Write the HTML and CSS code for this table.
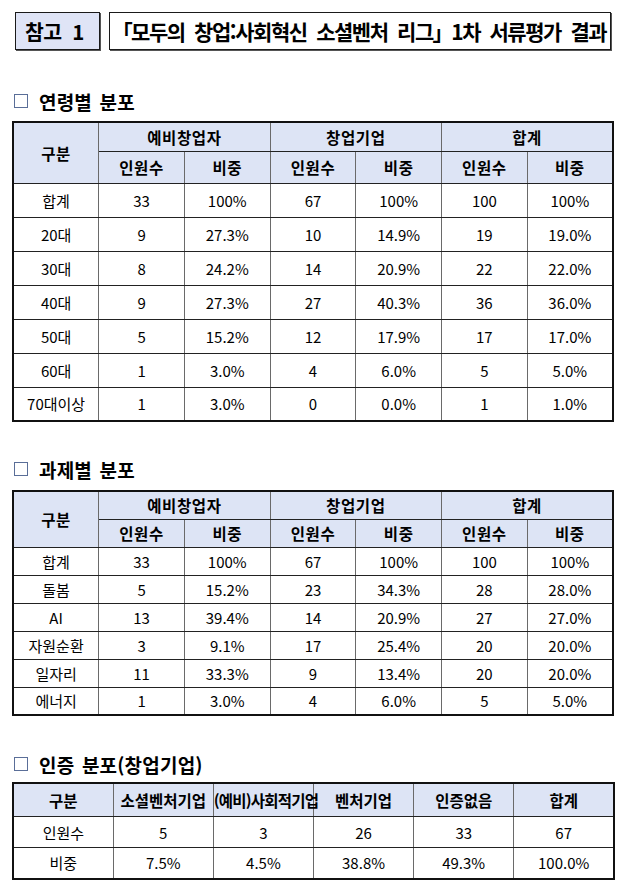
FILE: index.html
```html
<!DOCTYPE html>
<html lang="ko">
<head>
<meta charset="utf-8">
<title>1차 서류평가 결과</title>
<link rel="stylesheet" href="styles.css">
</head>
<body>
<div class="page">
  <div class="top">
    <div class="tag">참고&nbsp;&nbsp;1</div>
    <div class="title">「모두의 창업:사회혁신 소셜벤처 리그」 1차 서류평가 결과</div>
  </div>

  <h2 class="sec sec-1"><span class="chk"></span>연령별 분포</h2>
  <table class="grid grid-age">
    <thead>
      <tr class="h1">
        <th rowspan="2">구분</th>
        <th colspan="2">예비창업자</th>
        <th colspan="2">창업기업</th>
        <th colspan="2">합계</th>
      </tr>
      <tr class="h2">
        <th>인원수</th><th>비중</th><th>인원수</th><th>비중</th><th>인원수</th><th>비중</th>
      </tr>
    </thead>
    <tbody>
      <tr><td>합계</td><td>33</td><td>100%</td><td>67</td><td>100%</td><td>100</td><td>100%</td></tr>
      <tr><td>20대</td><td>9</td><td>27.3%</td><td>10</td><td>14.9%</td><td>19</td><td>19.0%</td></tr>
      <tr><td>30대</td><td>8</td><td>24.2%</td><td>14</td><td>20.9%</td><td>22</td><td>22.0%</td></tr>
      <tr><td>40대</td><td>9</td><td>27.3%</td><td>27</td><td>40.3%</td><td>36</td><td>36.0%</td></tr>
      <tr><td>50대</td><td>5</td><td>15.2%</td><td>12</td><td>17.9%</td><td>17</td><td>17.0%</td></tr>
      <tr><td>60대</td><td>1</td><td>3.0%</td><td>4</td><td>6.0%</td><td>5</td><td>5.0%</td></tr>
      <tr><td>70대이상</td><td>1</td><td>3.0%</td><td>0</td><td>0.0%</td><td>1</td><td>1.0%</td></tr>
    </tbody>
  </table>

  <h2 class="sec sec-2"><span class="chk"></span>과제별 분포</h2>
  <table class="grid grid-task">
    <thead>
      <tr>
        <th rowspan="2">구분</th>
        <th colspan="2">예비창업자</th>
        <th colspan="2">창업기업</th>
        <th colspan="2">합계</th>
      </tr>
      <tr>
        <th>인원수</th><th>비중</th><th>인원수</th><th>비중</th><th>인원수</th><th>비중</th>
      </tr>
    </thead>
    <tbody>
      <tr><td>합계</td><td>33</td><td>100%</td><td>67</td><td>100%</td><td>100</td><td>100%</td></tr>
      <tr><td>돌봄</td><td>5</td><td>15.2%</td><td>23</td><td>34.3%</td><td>28</td><td>28.0%</td></tr>
      <tr><td>AI</td><td>13</td><td>39.4%</td><td>14</td><td>20.9%</td><td>27</td><td>27.0%</td></tr>
      <tr><td>자원순환</td><td>3</td><td>9.1%</td><td>17</td><td>25.4%</td><td>20</td><td>20.0%</td></tr>
      <tr><td>일자리</td><td>11</td><td>33.3%</td><td>9</td><td>13.4%</td><td>20</td><td>20.0%</td></tr>
      <tr><td>에너지</td><td>1</td><td>3.0%</td><td>4</td><td>6.0%</td><td>5</td><td>5.0%</td></tr>
    </tbody>
  </table>

  <h2 class="sec sec-3"><span class="chk"></span>인증 분포(창업기업)</h2>
  <table class="grid grid-cert">
    <thead>
      <tr>
        <th>구분</th><th>소셜벤처기업</th><th class="tight">(예비)사회적기업</th><th>벤처기업</th><th>인증없음</th><th>합계</th>
      </tr>
    </thead>
    <tbody>
      <tr><td>인원수</td><td>5</td><td>3</td><td>26</td><td>33</td><td>67</td></tr>
      <tr><td>비중</td><td>7.5%</td><td>4.5%</td><td>38.8%</td><td>49.3%</td><td>100.0%</td></tr>
    </tbody>
  </table>
</div>
</body>
</html>
```

FILE: styles.css
```css
html, body {
  margin: 0;
  padding: 0;
  background: #ffffff;
}

body {
  font-family: "Noto Sans CJK KR", "Noto Sans", "Liberation Sans", sans-serif;
  color: #000000;
}

.page {
  width: 638px;
  padding: 12px 0 0 12px;
  box-sizing: border-box;
}

.top {
  display: flex;
  gap: 9px;
  margin-left: 3px;
  height: 38px;
}

.tag,
.title {
  box-sizing: border-box;
  height: 38px;
  border: 1px solid #1a1a1a;
  box-shadow: 1px 1px 0 #555555;
  display: flex;
  align-items: center;
  font-weight: 700;
  white-space: nowrap;
}

.tag {
  width: 85px;
  background: #dfe4f6;
  font-size: 20.5px;
  letter-spacing: -0.5px;
  padding-left: 9px;
}

.title {
  width: 502px;
  background: #ffffff;
  font-size: 21px;
  font-feature-settings: "palt" 1;
  letter-spacing: -1.45px;
  word-spacing: 5px;
  padding-left: 12px;
  overflow: hidden;
}

.sec {
  display: flex;
  align-items: center;
  gap: 11px;
  height: 24px;
  margin: 0;
  padding-left: 2px;
  font-size: 19px;
  font-weight: 700;
  letter-spacing: 0.2px;
  word-spacing: 2px;
}

.sec-1 { margin: 39px 0 8px; }
.sec-2 { margin: 35px 0 9px; }
.sec-3 { margin: 36px 0 6px; }

.chk {
  display: inline-block;
  width: 12px;
  height: 12px;
  border: 1px solid #5a6e98;
  flex: none;
}

.grid {
  border-collapse: collapse;
  table-layout: fixed;
  width: 602px;
  border: 2px solid #111111;
  font-size: 15px;
}

.grid th,
.grid td {
  border-top: 1px solid #222222;
  border-bottom: 1px solid #222222;
  border-left: 1px solid #6a6a6a;
  border-right: 1px solid #6a6a6a;
  padding: 0;
  text-align: center;
  vertical-align: middle;
  white-space: nowrap;
}

.grid th {
  background: #dde4f5;
  font-weight: 700;
  font-size: 15.5px;
  letter-spacing: 0.6px;
}

.grid td {
  font-weight: 400;
}

.grid-age thead tr.h1 { height: 29px; }
.grid-age thead tr.h2 { height: 32px; }
.grid-age tbody tr { height: 34px; }

.grid-task thead tr { height: 28px; }
.grid-task tbody tr { height: 28px; }

.grid-cert {
  width: 603px;
}

.grid-cert th { height: 32px; letter-spacing: 0; }
.grid-cert tbody tr { height: 31px; }
.grid-cert th.tight { letter-spacing: -0.8px; }
```
